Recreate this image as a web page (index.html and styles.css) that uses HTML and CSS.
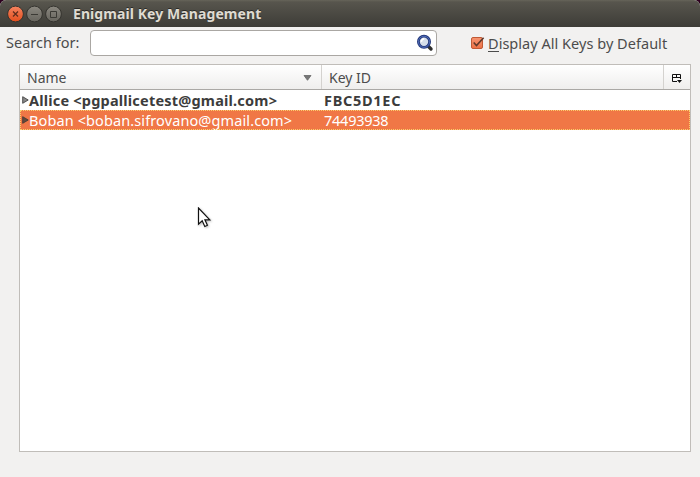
FILE: index.html
```html
<!DOCTYPE html>
<html lang="en">
<head>
<meta charset="utf-8">
<title>Enigmail Key Management</title>
<link rel="stylesheet" href="styles.css">
</head>
<body>
<div class="window">
  <header class="titlebar">
    <svg class="controls" width="56" height="18" viewBox="0 0 56 18">
      <defs>
        <linearGradient id="close" x1="0" y1="0" x2="0" y2="1"><stop offset="0" stop-color="#f58460"/><stop offset="1" stop-color="#e34e1d"/></linearGradient>
        <linearGradient id="grey" x1="0" y1="0" x2="0" y2="1"><stop offset="0" stop-color="#8b8880"/><stop offset="1" stop-color="#66645d"/></linearGradient>
      </defs>
      <g stroke="#35342f">
        <circle cx="9.500" cy="9" r="7.900" fill="url(#close)"/>
        <circle cx="28.500" cy="9" r="7.900" fill="url(#grey)"/>
        <circle cx="47.500" cy="9" r="7.900" fill="url(#grey)"/>
      </g>
      <path d="M7 6.500l5 5M12 6.500l-5 5" stroke="#612d1d" stroke-width="1.300"/>
      <path d="M25 9.500h7M44.500 6.500h6v6h-6z" stroke="#3b3a35" fill="none"/>
    </svg>
    <h1 class="title">Enigmail Key Management</h1>
  </header>
  <div class="toolbar">
    <label class="search-label">Search for:</label>
    <div class="search">
      <svg width="18" height="18" viewBox="0 0 18 18">
        <path d="M12.500 12.500l2.500 2.500" stroke="#2d2d2d" stroke-width="3.400" stroke-linecap="round"/>
        <circle cx="8" cy="7.800" r="5.600" fill="#d5deea" stroke="#24397c" stroke-width="2.800"/>
        <circle cx="8" cy="7.800" r="5.600" fill="none" stroke="#5270bd" stroke-width=".9"/>
        <path d="M5.300 7.800q.3-2.700 3-3" stroke="#fff" stroke-width="1.500" fill="none"/>
      </svg>
    </div>
    <svg class="check" width="14" height="14" viewBox="0 0 14 14">
      <defs><linearGradient id="box" x1="0" y1="0" x2="0" y2="1"><stop offset="0" stop-color="#f69471"/><stop offset="1" stop-color="#ec7145"/></linearGradient></defs>
      <rect x=".5" y="1.500" width="11" height="11" rx="1.500" fill="url(#box)" stroke="#c05a35"/>
      <path d="M2.700 6.500l2.800 3L12.600 1.800" fill="none" stroke="#5f382a" stroke-width="1.600"/>
    </svg>
    <label class="check-label"><span class="mnemonic">D</span>isplay All Keys by Default</label>
  </div>
  <main class="tree">
    <div class="head">
      <div class="cell name"><span>Name</span>
        <svg width="9" height="6" viewBox="0 0 9 6"><path d="M1 .500h7L4.500 5.300z" fill="#777" stroke="#666" stroke-width=".8"/></svg>
      </div>
      <div class="cell key"><span>Key ID</span></div>
      <div class="cell picker">
        <svg width="10" height="9" viewBox="0 0 10 9"><path d="M5 7.500H.500v-7h8V5M.500 3.500h8M4.500.500v3" fill="none" stroke="#111"/><path d="M5 6h5L7.500 9z" fill="#111"/></svg>
      </div>
    </div>
    <div class="row bold">
      <svg class="twisty" width="7" height="8" viewBox="0 0 7 8"><path d="M.7.700v6.600L6.200 4z" fill="#888" stroke="#444" stroke-width=".9"/></svg>
      <span class="uid">Allice &lt;pgpallicetest@gmail.com&gt;</span><span class="kid">FBC5D1EC</span>
    </div>
    <div class="row selected">
      <svg class="twisty" width="7" height="8" viewBox="0 0 7 8"><path d="M.7.700v6.600L6.200 4z" fill="#65483b" stroke="#443b36" stroke-width=".9"/></svg>
      <span class="uid">Boban &lt;boban.sifrovano@gmail.com&gt;</span><span class="kid">74493938</span>
    </div>
  </main>
  <svg class="cursor" width="15" height="22" viewBox="0 0 15 22"><path d="M1.500 1v16.200l3.700-3.500 2.600 5.800 2.600-1.200-2.500-5.500h4.900z" fill="#fff" stroke="#111" stroke-width="1.200"/></svg>
</div>
</body>
</html>
```
FILE: styles.css
```css
* { box-sizing: border-box; }
body { margin: 0; background: #2c001e; font: 14.5px/20px "Noto Sans", "Open Sans", sans-serif; color: #4c4c4c; }
svg { display: block; flex: none; }
.window { height: 477px; display: flex; flex-direction: column; background: #f2f1f0; border-radius: 6px 6px 0 0; overflow: hidden; white-space: nowrap; }
.titlebar { height: 27px; display: flex; align-items: center; padding-left: 6px; background: linear-gradient(#66645a 0, #57554d 2px, #3d3c37 100%); }
.title { margin: 0 0 0 11px; font-size: 14px; line-height: 20px; font-weight: 700; letter-spacing: .08px; color: #dfdbd2; text-shadow: 0 -1px #2b2a27; }
.toolbar { height: 37px; display: flex; align-items: flex-start; padding: 3px 0 0 6px; }
.search-label { width: 84px; padding-top: 2px; }
.search { width: 347px; height: 26px; display: flex; align-items: center; justify-content: flex-end; padding-right: 2px; background: #fff; border: 1px solid #aaa7a3; border-radius: 4px; }
.check { margin: 6px 0 0 34px; }
.check-label { margin: 3px 0 0 3px; letter-spacing: .03px; }
.mnemonic { display: inline-block; height: 19px; border-bottom: 1px solid #4c4c4c; }
.tree { width: 672px; height: 388px; margin-left: 19px; background: #fff; border: 1px solid #c0bdb9; }
.head { height: 25px; display: flex; font-size: 14px; background: linear-gradient(#fff, #efeeed); border-bottom: 1px solid #aaa8a5; }
.cell { display: flex; align-items: center; padding-top: 1px; border-right: 1px solid #d4d2cf; }
.name { width: 302px; padding-left: 7px; padding-right: 9px; justify-content: space-between; }
.key { width: 342px; padding-left: 7px; }
.picker { flex: 1; padding-left: 8px; padding-top: 2px; border-right: 0; }
.row { height: 20px; display: flex; align-items: center; padding-left: 2px; color: #3c3c3c; }
.twisty { margin-bottom: 1px; }
.bold { font-weight: 700; letter-spacing: .2px; }
.bold .kid { letter-spacing: .7px; }
.selected { background: #f07746; color: #fff; outline: 1px dotted #f9d06c; outline-offset: -1px; letter-spacing: .11px; }
.selected .kid { letter-spacing: -.25px; }
.uid { width: 295px; }
.cursor { position: absolute; left: 197px; top: 207px; filter: drop-shadow(1px 1px 1px #0004); }
```
